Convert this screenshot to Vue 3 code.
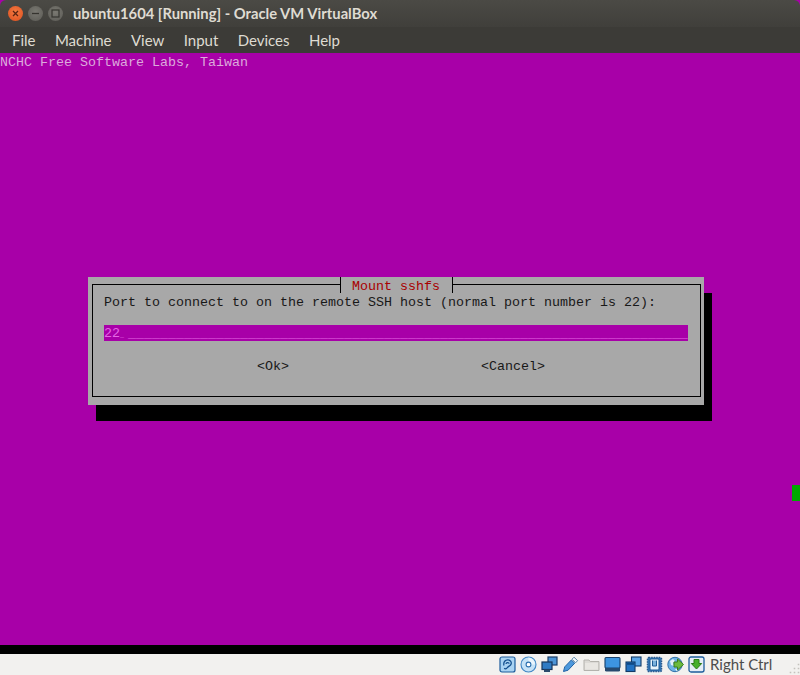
<script setup>
const menus = ['File', 'Machine', 'View', 'Input', 'Devices', 'Help']
const underscores = '_'.repeat(70)
</script>

<template>
  <div class="window">
    <header class="titlebar">
      <div class="controls">
        <span class="ctl close">
          <svg width="9" height="9" viewBox="0 0 9 9"><path d="M2 2l5 5M7 2l-5 5" stroke="#5a2412" stroke-width="1.300" fill="none" /></svg>
        </span>
        <span class="ctl">
          <svg width="9" height="9" viewBox="0 0 9 9"><path d="M1 4.500h7" stroke="#35342f" stroke-width="1.300" fill="none" /></svg>
        </span>
        <span class="ctl">
          <svg width="9" height="9" viewBox="0 0 9 9"><rect x="1" y="1" width="7" height="7" stroke="#35342f" stroke-width="1.200" fill="none" /></svg>
        </span>
      </div>
      <div class="title">ubuntu1604 [Running] - Oracle VM VirtualBox</div>
    </header>

    <nav class="menubar">
      <span v-for="m in menus" :key="m" class="menu">{{ m }}</span>
    </nav>

    <main class="terminal">
      <div class="banner">NCHC Free Software Labs, Taiwan</div>
      <div class="marker"></div>
      <section class="dialog">
        <div class="frame">
          <div class="legend-row">
            <span class="legend">Mount sshfs</span>
          </div>
          <div class="prompt">Port to connect to on the remote SSH host (normal port number is 22):</div>
          <div class="input">22<span class="cursor">_</span>{{ underscores }}</div>
          <div class="buttons">
            <span>&lt;Ok&gt;</span>
            <span>&lt;Cancel&gt;</span>
          </div>
        </div>
      </section>
    </main>

    <div class="blackline"></div>

    <footer class="statusbar">
      <svg class="icon" viewBox="0 0 17 17"><rect x="1" y="1" width="15" height="15" rx="2" fill="#a9d3f2" stroke="#1d5c9c" stroke-width="1.200" /><path d="M5 9.500C4 6 6.500 3.600 9 3.800c2.600.2 4 2.700 2.800 4.800-1 1.700-3.100 1.800-3.700 3.200-.6 1.300-2.300 1.400-2.700.2M7 8c.2-1.700 2.800-2 3.200-.3" fill="none" stroke="#14508e" stroke-width="1.300" /></svg>
      <svg class="icon cd" viewBox="0 0 17 17"><circle cx="8.500" cy="8.500" r="7.500" fill="#c5e2f6" stroke="#3f86c4" stroke-width="1.100" /><path d="M8.500 1.500A7 7 0 0 1 15 8.500L8.500 8.500Z" fill="#e9f5fc" /><circle cx="8.500" cy="8.500" r="2.400" fill="#fff" stroke="#2a6fae" stroke-width="1.100" /></svg>
      <svg class="icon net" viewBox="0 0 17 17"><rect x="7" y="1" width="9" height="8" fill="#4c94d6" stroke="#1b3d66" stroke-width="1.200" /><rect x="1" y="6" width="10" height="7.500" fill="#2f7bc4" stroke="#16365c" stroke-width="1.200" /><rect x="3" y="13.500" width="6" height="2.500" fill="#2b4a6c" /></svg>
      <svg class="icon usb" viewBox="0 0 17 17"><path d="M1.500 15.500l1.200-4.600 6.600-6.900 3.400 3.200-6.600 7z" fill="#4c98dc" stroke="#1f63a6" stroke-width="1" /><path d="M10 3.200l2-2 3.600 3.400-2 2.200z" fill="#f4f8fb" stroke="#5a86a8" stroke-width="1" /></svg>
      <svg class="icon folder" viewBox="0 0 17 17"><path d="M1 14.500V4h5l1.200 1.500H16v9z" fill="#dcdad6" stroke="#b4b2ad" stroke-width="1" /><rect x="2" y="7" width="13" height="6.500" fill="#e8e6e2" /></svg>
      <svg class="icon screen" viewBox="0 0 17 17"><rect x="1" y="1.500" width="15" height="10.500" rx="1" fill="#3d94e0" stroke="#17406c" stroke-width="1.100" /><path d="M1 12h15v2.200q0 1.300-1.500 1.300h-12q-1.500 0-1.500-1.300z" fill="#27496e" /></svg>
      <svg class="icon windows" viewBox="0 0 17 17"><rect x="6.500" y="1" width="9.500" height="9" fill="#5aa4e6" stroke="#123a66" stroke-width="1.100" /><rect x="1" y="6" width="9" height="9.500" fill="#2272c2" stroke="#123a66" stroke-width="1.100" /><rect x="2" y="7" width="7" height="1.800" fill="#0f4a86" /></svg>
      <svg class="icon chip" viewBox="0 0 17 17"><rect x="1.500" y="1.500" width="14" height="14" rx="1.200" fill="#3478b8" stroke="#2a5a8e" stroke-width="1.500" stroke-dasharray="1.500 1" /><rect x="4" y="3" width="9" height="11" rx="1" fill="#e8f2fa" stroke="#1f5a94" stroke-width="1" /><path d="M6.500 4.500v5.500h4V4.500" fill="#7ab0dc" stroke="#1f5a94" stroke-width="1" /></svg>
      <svg class="icon globe" viewBox="0 0 17 17"><circle cx="8" cy="8.500" r="7.200" fill="#6fb3e6" stroke="#2f6fa8" stroke-width="1" /><path d="M3 5l3-2 2 2-2 2 1 3-3-1zM8 13l3 0-1 2.500z" fill="#e4f1fa" /><path d="M7 6h3.500V3l6 5.500-6 5.500v-3H7z" fill="#6cbb3c" stroke="#3b7d1e" stroke-width="1" /></svg>
      <svg class="icon vbox" viewBox="0 0 17 17"><rect x="1" y="1" width="15" height="15" rx="2" fill="#e4eef7" stroke="#1d5c9c" stroke-width="1.300" /><path d="M6 3.500h5v4h2.700L8.500 13 3.300 7.500H6z" fill="#45b02c" stroke="#2a7a18" stroke-width="1" /></svg>
      <span class="hostkey">Right Ctrl</span>
      <svg class="grip" width="12" height="12" viewBox="0 0 12 12"><path d="M10.500 1.500v.01M10.500 5.500v.01M6.500 5.500v.01M10.500 9.500v.01M6.500 9.500v.01M2.500 9.500v.01" stroke="#c4c2bd" stroke-width="1.600" stroke-linecap="square" /></svg>
    </footer>
  </div>
</template>

<style>
html, body { margin: 0; background: #a800a8; overflow: hidden; }
</style>

<style scoped>
.window {
  width: 800px;
  height: 675px;
  display: flex;
  flex-direction: column;
  overflow: hidden;
}
.titlebar {
  height: 27px;
  background: linear-gradient(#4b4a45, #403f3b);
  border-radius: 6px 6px 0 0;
  display: flex;
  align-items: center;
  padding-left: 8px;
  box-sizing: border-box;
  flex: none;
}
.controls {
  display: flex;
  gap: 5px;
  width: 65px;
  flex: none;
}
.ctl {
  width: 15px;
  height: 15px;
  border-radius: 50%;
  background: radial-gradient(circle at 50% 40%, #7a7972, #5a5954);
  display: flex;
  align-items: center;
  justify-content: center;
}
.ctl.close { background: radial-gradient(circle at 50% 40%, #f47a42, #dc4f1e); }
.title {
  font: 700 14.75px/27px Lato, sans-serif;
  color: #dfdbd2;
  white-space: nowrap;
}
.menubar {
  height: 26px;
  background: #3c3b37;
  display: flex;
  align-items: center;
  padding-left: 12px;
  gap: 19.4px;
  flex: none;
}
.menu {
  font: 15px/26px Lato, sans-serif;
  color: #dfdbd2;
}
.terminal {
  position: relative;
  flex: 1;
  background: #a800a8;
  font-family: "Liberation Mono", monospace;
  font-size: 13.333px;
  line-height: 18px;
}
.banner {
  height: 16px;
  color: #dcaadc;
  line-height: 20px;
}
.marker {
  position: absolute;
  right: 0;
  top: 432px;
  width: 8px;
  height: 16px;
  background: #00a800;
}
.dialog {
  position: absolute;
  left: 88px;
  top: 224px;
  width: 616px;
  height: 128px;
  box-sizing: border-box;
  padding: 7px 3px 8px 4px;
  background: #a8a8a8;
  box-shadow: 8px 16px 0 #000;
  color: #181818;
  white-space: pre;
}
.frame {
  height: 113px;
  box-sizing: border-box;
  border: 1px solid #000;
  padding: 0 11px;
}
.legend-row {
  display: flex;
  justify-content: center;
  height: 9px;
  margin-left: -1px;
}
.legend {
  width: 113px;
  height: 16px;
  margin-top: -8px;
  box-sizing: border-box;
  background: #a8a8a8;
  border: solid #000;
  border-width: 0 1px;
  color: #a80000;
  text-align: center;
  line-height: 20px;
}
.prompt {
  height: 16px;
}
.input {
  margin-top: 15px;
  width: 584px;
  height: 16px;
  overflow: hidden;
  background: #a800a8;
  color: #e468e4;
  line-height: 18px;
}
.cursor {
  display: inline-block;
  width: 4px;
  margin-right: 4px;
  font-size: 6.667px;
}
.buttons {
  margin-top: 17px;
  display: flex;
  padding-left: 153px;
  gap: 192px;
}
.blackline {
  height: 9px;
  background: #000;
  flex: none;
}
.statusbar {
  height: 21px;
  flex: none;
  background: #f2f1ef;
  display: flex;
  align-items: center;
  padding-left: 499px;
  gap: 4px;
}
.icon {
  width: 17px;
  height: 17px;
  flex: none;
}
.hostkey {
  margin-left: 1px;
  font: 15px/21px Lato, sans-serif;
  color: #4c4c4c;
  white-space: nowrap;
}
.grip {
  margin-left: auto;
  align-self: flex-end;
}
</style>
